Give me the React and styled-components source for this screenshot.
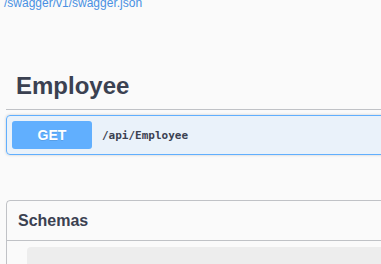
import React from "react";
import styled, { createGlobalStyle } from "styled-components";

const Global = createGlobalStyle`
  html, body {
    margin: 0;
    padding: 0;
    background: #fafafa;
    overflow: hidden;
  }
  body {
    font-family: "Liberation Sans", Arial, sans-serif;
  }
`;

const Page = styled.div`
  width: 640px;
  display: flex;
  flex-direction: column;
`;

const SpecLink = styled.a`
  display: block;
  margin: -4px 0 0 4px;
  font-size: 12px;
  line-height: 14px;
  color: #4990e2;
  text-decoration: none;
`;

const TagSection = styled.section`
  margin: 52px 0 0 6px;
`;

const TagHeading = styled.h3`
  margin: 0 0 5px;
  padding: 10px 20px 10px 10px;
  font-size: 24px;
  font-weight: 700;
  line-height: 27px;
  color: #3b4151;
  border-bottom: 1px solid rgba(59, 65, 81, 0.3);
`;

const OpBlock = styled.div`
  border: 1px solid #61affe;
  border-radius: 4px;
  background: rgba(97, 175, 254, 0.1);
  box-shadow: 0 0 3px rgba(0, 0, 0, 0.19);
`;

const Summary = styled.div`
  display: flex;
  align-items: center;
  padding: 5px;
`;

const MethodBadge = styled.span`
  min-width: 80px;
  padding: 6px 0;
  border-radius: 3px;
  background: #61affe;
  color: #fff;
  font-size: 14px;
  font-weight: 700;
  line-height: 16px;
  text-align: center;
  text-shadow: 0 1px 0 rgba(0, 0, 0, 0.1);
`;

const Path = styled.span`
  padding: 0 10px;
  font-family: "DejaVu Sans Mono", "Liberation Mono", monospace;
  font-size: 11px;
  font-weight: 600;
  color: #3b4151;
`;

const Models = styled.section`
  margin: 45px 0 0 6px;
  border: 1px solid rgba(59, 65, 81, 0.3);
  border-radius: 4px;
  padding-bottom: 20px;
`;

const ModelsHeading = styled.h4`
  margin: 0;
  padding: 10px 20px 10px 11px;
  font-size: 16px;
  font-weight: 700;
  line-height: 19px;
  color: #3b4151;
  border-bottom: 1px solid rgba(59, 65, 81, 0.3);
`;

const ModelContainer = styled.div`
  margin: 6px 20px 15px;
  height: 40px;
  border-radius: 4px;
  background: rgba(0, 0, 0, 0.05);
`;

export default function App() {
  return (
    <>
      <Global />
      <Page>
        <SpecLink href="#">/swagger/v1/swagger.json</SpecLink>
        <TagSection>
          <TagHeading>Employee</TagHeading>
          <OpBlock>
            <Summary>
              <MethodBadge>GET</MethodBadge>
              <Path>/api/Employee</Path>
            </Summary>
          </OpBlock>
        </TagSection>
        <Models>
          <ModelsHeading>Schemas</ModelsHeading>
          <ModelContainer />
        </Models>
      </Page>
    </>
  );
}
